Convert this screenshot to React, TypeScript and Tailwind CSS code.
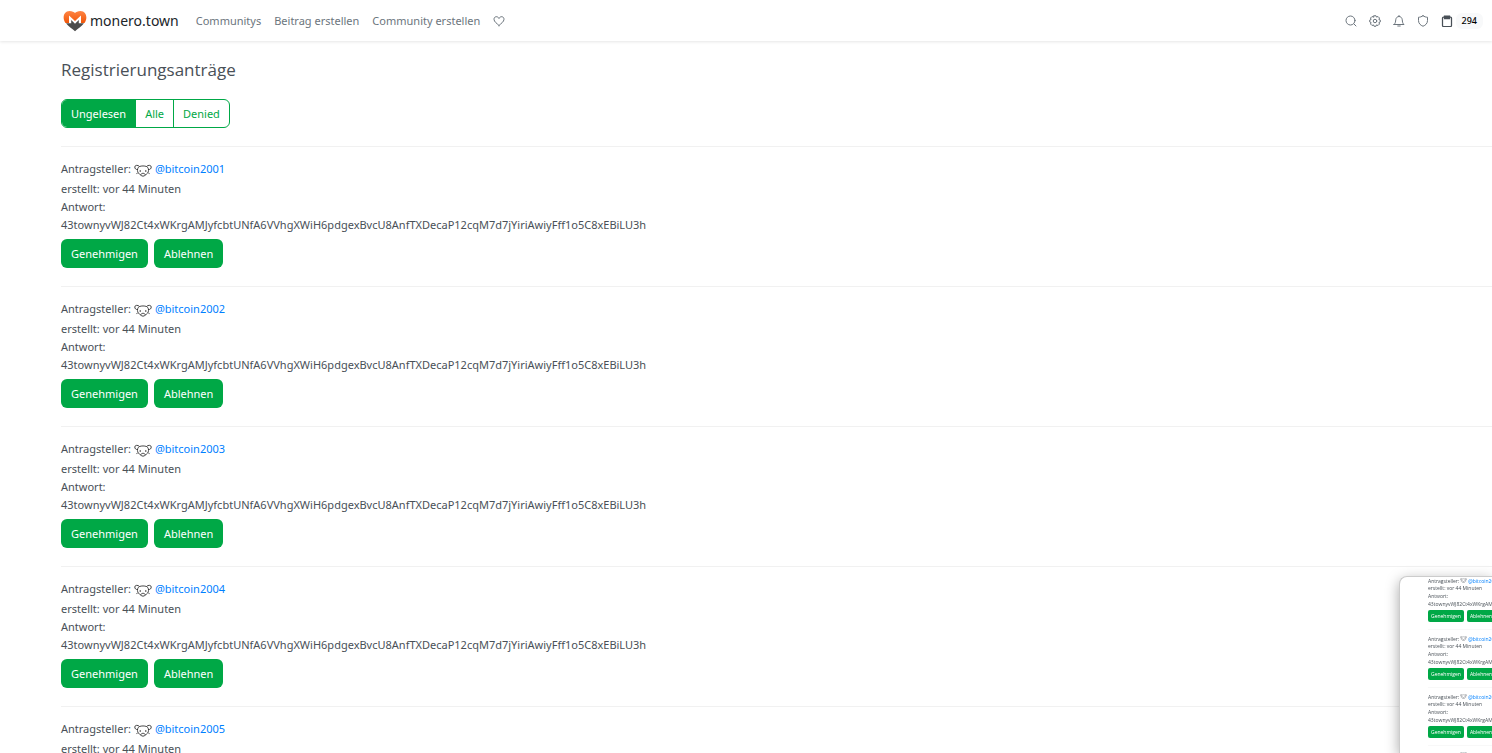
import type { ReactNode } from "react";

const ANSWER =
  "43townyvWJ82Ct4xWKrgAMJyfcbtUNfA6VVhgXWiH6pdgexBvcU8AnfTXDecaP12cqM7d7jYiriAwiyFff1o5C8xEBiLU3h";

const applicants = ["bitcoin2001", "bitcoin2002", "bitcoin2003", "bitcoin2004", "bitcoin2005"];
const previewApplicants = ["bitcoin2001", "bitcoin2002", "bitcoin2003", "bitcoin2004"];

const LemmyIcon = ({ className }: { className: string }) => (
  <svg viewBox="0 0 36 26" className={className} fill="none" stroke="currentColor" strokeWidth="1.8">
    <path d="M8 11C4 12 1.500 9 1.500 6C1.500 2 8 1.500 11 5M28 11C32 12 34.500 9 34.500 6C34.500 2 28 1.500 25 5" />
    <path d="M11 5C15 3.500 21 3.500 25 5C28.500 7 29 10 29 13C29 17 26 20 22.500 22M11 5C7.500 7 7 10 7 13C7 17 10 20 13.500 22" />
    <path d="M13.500 22C13.500 17.500 22.500 17.500 22.500 22C22 25 14 25 13.500 22Z" />
    <path d="M8 18L4 19.500M28 18L32 19.500" strokeWidth="1" />
    <circle cx="12.500" cy="14" r="1.600" fill="currentColor" stroke="none" />
    <circle cx="23.500" cy="14" r="1.600" fill="currentColor" stroke="none" />
  </svg>
);

const Logo = () => (
  <svg viewBox="0 0 24 22" className="w-6 h-[22px]">
    <defs>
      <linearGradient id="heart" x1="0" y1="0" x2="0" y2="1">
        <stop offset="0" stopColor="#ff8544" />
        <stop offset="1" stopColor="#f0560a" />
      </linearGradient>
    </defs>
    <path d="M2.500 13C-1 8.500 .5 1 6.500 1C9.300 1 11 2 12 3C13 2 14.700 1 17.500 1C23.500 1 25 8.500 21.500 13Z" fill="url(#heart)" />
    <path d="M6 13.200V5.500L12 11L18 5.500V13.200Z" fill="#fff" />
    <path d="M3 13.200H8.200V10L12 13.800L15.800 10V13.200H21C18.500 16.500 15 18.500 12 21.200C9 18.500 5.500 16.500 3 13.200Z" fill="#4c4c4c" />
  </svg>
);

const NavIcon = ({ label, children }: { label: string; children: ReactNode }) => (
  <a href="#" aria-label={label} className="text-[#6c757d]">
    <svg
      viewBox="0 0 24 24"
      className="w-3 h-3"
      fill="none"
      stroke="currentColor"
      strokeWidth="2"
      strokeLinecap="round"
      strokeLinejoin="round"
    >
      {children}
    </svg>
  </a>
);

const Navbar = () => (
  <header className="bg-white shadow-[0_1px_3px_rgba(0,0,0,0.1)]">
    <nav className="flex items-center justify-between h-[41px] pl-[63px] pr-[9px]">
      <div className="flex items-center gap-[13px] text-[#6c757d]">
        <a href="#" className="flex items-center gap-[3px] mr-1 text-[14px] text-[#212529]">
          <Logo />
          monero.town
        </a>
        <a href="#">Communitys</a>
        <a href="#">Beitrag erstellen</a>
        <a href="#">Community erstellen</a>
        <NavIcon label="Unterstützen">
          <path d="M12 21C8 17 2 13.500 2 8.500C2 2.500 9.500 1.500 12 7C14.500 1.500 22 2.500 22 8.500C22 13.500 16 17 12 21Z" />
        </NavIcon>
      </div>
      <div className="flex items-center gap-3">
        <NavIcon label="Suche">
          <circle cx="11" cy="11" r="9" />
          <path d="M18 18L22 22" />
        </NavIcon>
        <NavIcon label="Einstellungen">
          <path d="M10 1.500H14L15 4.200L18 3L21 6L19.800 9L22.500 10V14L19.800 15L21 18L18 21L15 19.800L14 22.500H10L9 19.800L6 21L3 18L4.200 15L1.500 14V10L4.200 9L3 6L6 3L9 4.200Z" />
          <circle cx="12" cy="12" r="3.500" />
        </NavIcon>
        <NavIcon label="Benachrichtigungen">
          <path d="M12 1V3M2 19H22C18.500 16 19 13 18.500 9.500C18 5.500 15.500 3 12 3C8.500 3 6 5.500 5.500 9.500C5 13 5.500 16 2 19ZM9.500 22H14.500" />
        </NavIcon>
        <NavIcon label="Meldungen">
          <path d="M12 1.500C9 3.500 6 4.500 3 4.500V11C3 17 7 20.500 12 22.500C17 20.500 21 17 21 11V4.500C18 4.500 15 3.500 12 1.500Z" />
        </NavIcon>
        <a href="#" className="flex items-center gap-[3px] text-[#495057]">
          <svg viewBox="0 0 24 24" className="w-3 h-3" fill="none" stroke="currentColor" strokeWidth="2.500">
            <rect x="3" y="4" width="18" height="19" rx="2" />
            <path d="M7 2H17V7H7Z" fill="currentColor" />
          </svg>
          <span className="px-[6px] rounded-md bg-[#f8f9fa] text-[9px] leading-4 font-medium text-black">294</span>
        </a>
      </div>
    </nav>
  </header>
);

const filters = [
  { id: "unread", label: "Ungelesen" },
  { id: "all", label: "Alle" },
  { id: "denied", label: "Denied" },
];

const FilterGroup = () => (
  <div role="radiogroup" aria-label="Filter" className="inline-flex rounded-md border border-[#00a846] overflow-hidden">
    {filters.map(({ id, label }) => (
      <label
        key={id}
        className="px-[9px] leading-[27px] text-[#00a846] border-l border-[#00a846] first:border-l-0 has-checked:bg-[#00a846] has-checked:text-white cursor-pointer"
      >
        <input type="radio" name="filter" defaultChecked={id === "unread"} className="sr-only" />
        {label}
      </label>
    ))}
  </div>
);

const Application = ({ name }: { name: string }) => (
  <article className="border-t border-[#f1f1f1] pt-3 pb-[18px]">
    <div className="flex items-center h-5 mb-px">
      Antragsteller:
      <LemmyIcon className="w-[18px] h-[13px] mx-[3px] mt-[2px] text-[#333]" />
      <a href="#" className="text-[#0080ff]">@{name}</a>
    </div>
    <div>erstellt: vor 44 Minuten</div>
    <div>Antwort:</div>
    <div className="break-words">{ANSWER}</div>
    <div className="flex gap-[6px] mt-[5px]">
      <button className="px-[10px] h-[29px] rounded-md bg-[#00a846] text-white">Genehmigen</button>
      <button className="px-[10px] h-[29px] rounded-md bg-[#00a846] text-white">Ablehnen</button>
    </div>
  </article>
);

const PreviewItem = ({ name }: { name: string }) => (
  <div className="h-[58px] w-[300px] font-['Open_Sans',sans-serif] text-[5px] leading-[8px]">
    <div className="flex items-center h-[7px]">
      Antragsteller:
      <LemmyIcon className="w-[7px] h-[5px] mx-[1px]" />
      <a href="#" className="text-[#0080ff]">@{name}</a>
    </div>
    <div>erstellt: vor 44 Minuten</div>
    <div>Antwort:</div>
    <div>{ANSWER}</div>
    <div className="flex gap-[3px] mt-[2px] pb-[7px] border-b border-[#f8f8f8]">
      <button className="px-[3px] h-3 rounded-[2px] bg-[#00a846] text-white">Genehmigen</button>
      <button className="px-[3px] h-3 rounded-[2px] bg-[#00a846] text-white">Ablehnen</button>
    </div>
  </div>
);

export default function App() {
  return (
    <div className="h-screen overflow-hidden bg-white font-['Noto_Sans',sans-serif] text-[11px] leading-[18px] text-[#495057]">
      <Navbar />
      <main className="pl-[61px]">
        <h1 className="pt-[18px] mb-[18px] font-['Open_Sans',sans-serif] text-[17px] leading-[22px]">Registrierungsanträge</h1>
        <div className="flex mb-[18px]">
          <FilterGroup />
        </div>
        {applicants.map((name) => (
          <Application key={name} name={name} />
        ))}
      </main>

      {/* Floating thumbnail of the list */}
      <aside className="fixed right-0 bottom-0 w-[93px] h-[177px] pl-7 overflow-hidden rounded-tl-lg bg-white border-l border-t border-[#ccc] shadow-[0_4px_14px_rgba(0,0,0,0.35)]">
        {previewApplicants.map((name) => (
          <PreviewItem key={name} name={name} />
        ))}
      </aside>
    </div>
  );
}
